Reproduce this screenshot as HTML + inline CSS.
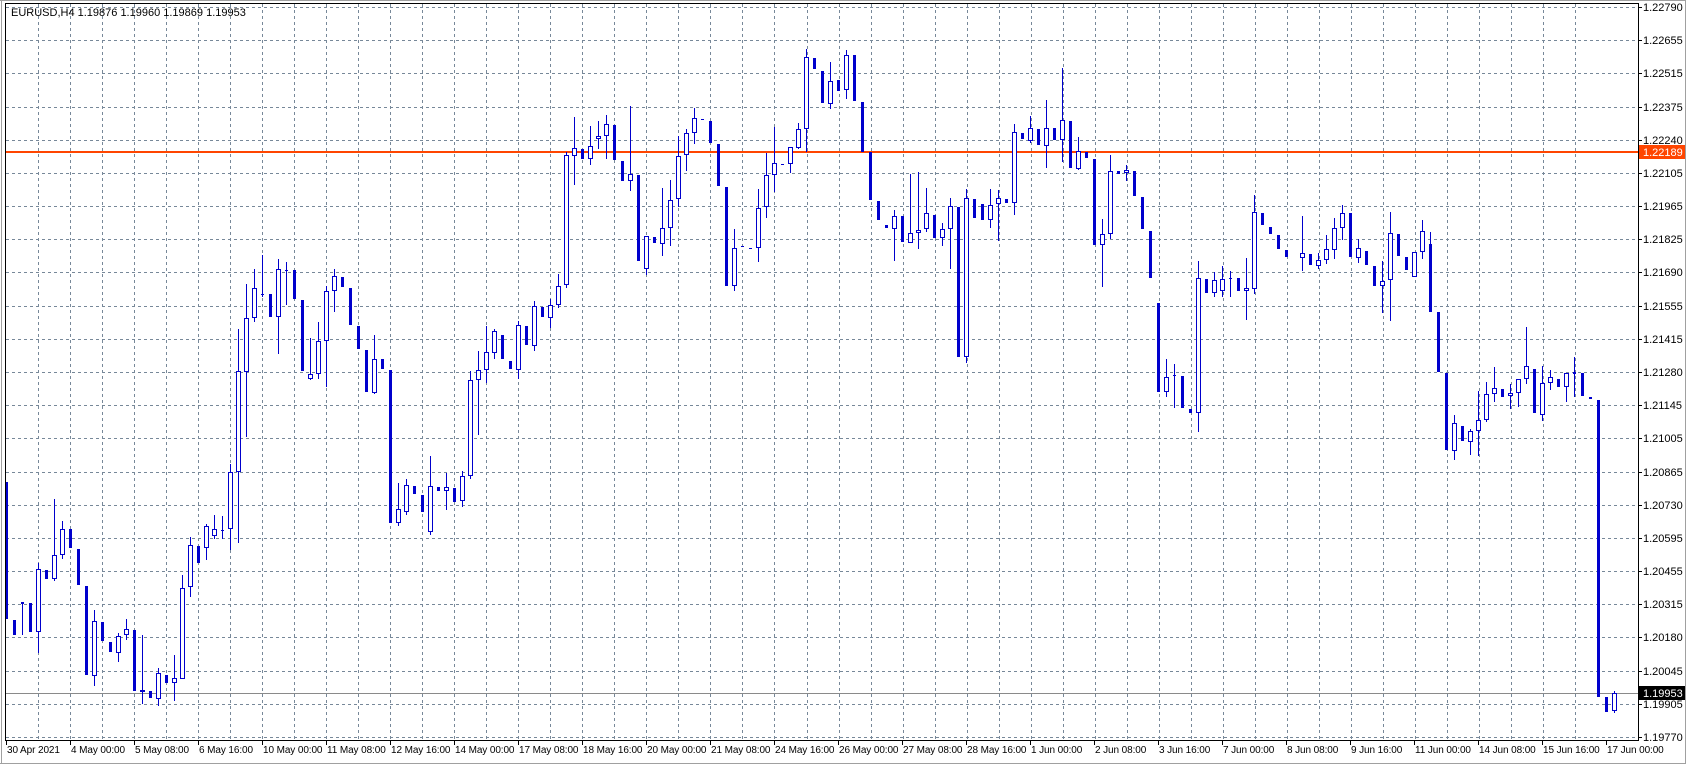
<!DOCTYPE html>
<html><head><meta charset="utf-8"><style>
html,body{margin:0;padding:0;background:#fff;width:1686px;height:764px;overflow:hidden}
svg{display:block;shape-rendering:crispEdges}
text{font-family:"Liberation Sans",sans-serif;font-size:11px;fill:#000}
text.t{font-size:10px;letter-spacing:-0.1px}
</style></head><body>
<svg id="s" width="1686" height="764" xmlns="http://www.w3.org/2000/svg">
<rect x="0" y="0" width="1686" height="764" fill="#fff"/>
<g id="grid" stroke="#778899" stroke-width="1" stroke-dasharray="3,3"></g>
<line x1="5" y1="693.5" x2="1638" y2="693.5" stroke="#8a8a8a"/>
<rect x="5" y="151" width="1633" height="2" fill="#ff4500"/>
<g id="bars"></g>
<line x1="1.5" y1="0" x2="1.5" y2="764" stroke="#a0a0a0"/>
<line x1="5.5" y1="3" x2="5.5" y2="741" stroke="#000"/>
<line x1="5" y1="3.5" x2="1639" y2="3.5" stroke="#000"/>
<line x1="0" y1="0.5" x2="1686" y2="0.5" stroke="#a0a0a0"/>
<line x1="1638.5" y1="3" x2="1638.5" y2="741" stroke="#000"/>
<line x1="5" y1="740.5" x2="1639" y2="740.5" stroke="#000"/>
<line x1="0" y1="763.5" x2="1686" y2="763.5" stroke="#a0a0a0"/>
<line x1="1685.5" y1="0" x2="1685.5" y2="764" stroke="#a0a0a0"/>
<g id="axis"></g>
<text x="11" y="16">EURUSD,H4  1.19876 1.19960 1.19869 1.19953</text>
<rect x="1639" y="145" width="46" height="14" fill="#ff4500"/>
<text x="1643" y="156" style="fill:#fff">1.22189</text>
<rect x="1639" y="686" width="46" height="14" fill="#000"/>
<text x="1643" y="697" style="fill:#fff">1.19953</text>
</svg>
<script>
var NS="http://www.w3.org/2000/svg";
function el(p,t,a,txt){var e=document.createElementNS(NS,t);for(var k in a)e.setAttribute(k,a[k]);if(txt)e.textContent=txt;p.appendChild(e);return e;}
var g=document.getElementById('grid');
for(var k=1;k<=49;k++){var x=Math.round(6+32.02*k)+0.5;el(g,'line',{x1:x,y1:4,x2:x,y2:740});}
for(var k=0;k<=22;k++){var y=Math.round(7+33.18*k)+0.5;el(g,'line',{x1:6,y1:y,x2:1638,y2:y});}
var ax=document.getElementById('axis');
var labs=["1.22790","1.22655","1.22515","1.22375","1.22240","1.22105","1.21965","1.21825","1.21690","1.21555","1.21415","1.21280","1.21145","1.21005","1.20865","1.20730","1.20595","1.20455","1.20315","1.20180","1.20045","1.19905","1.19770"];
for(var k=0;k<23;k++){var y=Math.round(7+33.18*k);el(ax,'line',{x1:1638,y1:y+0.5,x2:1642,y2:y+0.5,stroke:'#000'});el(ax,'text',{x:1643,y:y+4},labs[k]);}
var tl=["30 Apr 2021","4 May 00:00","5 May 08:00","6 May 16:00","10 May 00:00","11 May 08:00","12 May 16:00","14 May 00:00","17 May 08:00","18 May 16:00","20 May 00:00","21 May 08:00","24 May 16:00","26 May 00:00","27 May 08:00","28 May 16:00","1 Jun 00:00","2 Jun 08:00","3 Jun 16:00","7 Jun 00:00","8 Jun 08:00","9 Jun 16:00","11 Jun 00:00","14 Jun 08:00","15 Jun 16:00","17 Jun 00:00"];
for(var k=0;k<26;k++){var x=6+64*k;el(ax,'line',{x1:x+0.5,y1:740,x2:x+0.5,y2:745,stroke:'#000'});el(ax,'text',{x:x+1,y:753,'class':'t'},tl[k]);}
var D=`0 d 482 619
1 d 620 635
2 d 602 604 602 635
3 d 603 632
4 u 569 632 563 653
5 d 570 579
6 u 555 579 499 581
7 u 529 555 521 559
8 d 529 548
9 d 549 585
10 d 586 675
11 u 621 676 610 686
12 d 622 641
13 d 642 652
14 u 636 653 633 662
15 u 629 635 619 640
16 d 630 691
17 u 690 692 635 704
18 d 691 698
19 u 673 699 668 706
20 d 675 683
21 u 678 683 655 701
22 u 588 679 575 679
23 u 545 587 537 597
24 d 546 563
25 u 526 548 524 560
26 u 529 536 515 539
27 d 530 531 516 539
28 u 472 529 464 550
29 u 371 472 329 543
30 u 318 372 284 437
31 u 288 318 269 322
32 d 294 295 255 297
33 d 294 317
34 u 269 317 259 354
35 d 270 271 262 305
36 d 270 299
37 d 300 371
38 u 374 379 338 380
39 u 341 374 322 379
40 u 291 341 286 387
41 u 276 291 269 312
42 d 277 287
43 d 288 325
44 d 326 349
45 d 350 392
46 u 359 393 335 394
47 d 359 369
48 d 370 523
49 u 509 523 483 526
50 u 485 512 479 515
51 d 486 494
52 d 495 512
53 u 486 532 456 535
54 d 487 491
55 u 487 491 473 510
56 d 488 502
57 u 476 501 471 507
58 u 380 476 371 479
59 u 370 380 351 435
60 u 352 370 326 383
61 u 331 353 329 359
62 d 335 359
63 d 361 369
64 u 325 370 321 379
65 d 326 345
66 u 306 346 301 351
67 d 307 317
68 u 305 318 299 328
69 u 286 305 274 308
70 u 155 285 152 288
71 u 148 156 117 185
72 d 149 159
73 u 146 159 126 165
74 u 136 139 121 149
75 u 124 136 115 159
76 d 125 160
77 d 161 181
78 u 174 181 106 191
79 d 175 261
80 u 236 269 236 275
81 d 237 243
82 u 228 244 188 256
83 u 200 228 180 246
84 u 156 199 136 207
85 u 133 155 129 171
86 u 118 133 108 144
87 d 119 120
88 d 121 143
89 d 144 186
90 d 187 286
91 u 248 286 229 291
92 d 246 247
93 d 248 249
94 u 208 248 189 262
95 u 175 207 153 218
96 u 163 175 127 192
97 d 164 165
98 u 147 164 147 173
99 u 129 148 123 149
100 u 57 129 49 152
101 d 58 69
102 d 71 103
103 u 81 104 62 109
104 d 80 91
105 u 55 90 50 99
106 d 55 101
107 d 102 152
108 d 152 200
109 d 201 220
110 d 225 228
111 u 216 229 210 261
112 d 216 242
113 u 233 243 174 243
114 u 230 233 172 249
115 u 213 229 188 232
116 d 215 238
117 u 229 238 223 246
118 u 206 229 198 269
119 d 207 357
120 u 198 357 189 363
121 d 199 218
122 d 204 220
123 u 205 220 189 228
124 u 198 204 190 241
125 d 199 203
126 u 132 203 124 215
127 d 133 139
128 u 128 141 116 143
129 d 129 145
130 u 128 146 100 168
131 d 128 140
132 u 120 140 68 162
133 d 121 168
134 u 151 169 137 170
135 d 152 158
136 d 159 245
137 u 234 245 219 287
138 u 171 234 155 239
139 d 171 174
140 u 170 173 165 181
141 d 171 196
142 d 197 229
143 d 231 278
144 d 303 392
145 u 377 392 359 397
146 d 375 376 364 408
147 d 376 408
148 d 409 413
149 u 278 413 261 432
150 d 279 293
151 u 280 293 272 297
152 u 279 291 266 297
153 d 278 279 271 297
154 d 278 291
155 u 288 291 258 320
156 u 212 289 195 294
157 d 213 225
158 d 227 234
159 d 235 249
160 d 250 257
162 u 253 258 216 271
163 d 254 265
164 u 260 266 253 269
165 u 249 260 235 264
166 u 228 250 218 259
167 u 213 228 205 240
168 d 213 257
169 u 248 258 239 263
170 d 251 265
171 d 266 286
172 u 281 286 261 313
173 u 233 280 212 321
174 d 234 256
175 d 257 270
176 u 252 277 252 277
177 u 231 252 220 259
178 d 244 312 232 312
179 d 312 372
180 d 373 450
181 u 423 451 415 460
182 d 426 441
183 u 431 442 429 455
184 u 420 431 391 456
185 u 394 420 382 422
186 u 388 394 367 402
187 d 389 397
188 u 393 396 384 409
189 u 379 393 379 407
190 u 366 379 327 384
191 d 369 413
192 u 383 415 366 421
193 u 377 383 370 390
194 d 379 387
195 u 373 387 373 402
196 d 372 374 357 397
197 d 373 396
198 d 397 399
199 d 400 697
200 d 697 712
201 u 693 711 691 713`;
var b=document.getElementById('bars');var C='#0000cc';
D.split('\n').forEach(function(l){var p=l.trim().split(/\s+/);var i=+p[0],t=p[1],bt=+p[2],bb=+p[3];var wt=p.length>4?+p[4]:bt,wb=p.length>4?+p[5]:bb;
var col=6+8*i;
if(wt<bt||wb>bb)el(b,'rect',{x:col,y:wt,width:1,height:Math.max(1,wb-wt),fill:C});
if(t=='d'){el(b,'rect',{x:col-1,y:bt,width:3,height:Math.max(1,bb-bt),fill:C});}
else{var h=Math.max(2,bb-bt);el(b,'rect',{x:col-2,y:bt,width:5,height:h,fill:C});if(h>2)el(b,'rect',{x:col-1,y:bt+1,width:3,height:h-2,fill:'#fff'});}
});
</script>
</body></html>
